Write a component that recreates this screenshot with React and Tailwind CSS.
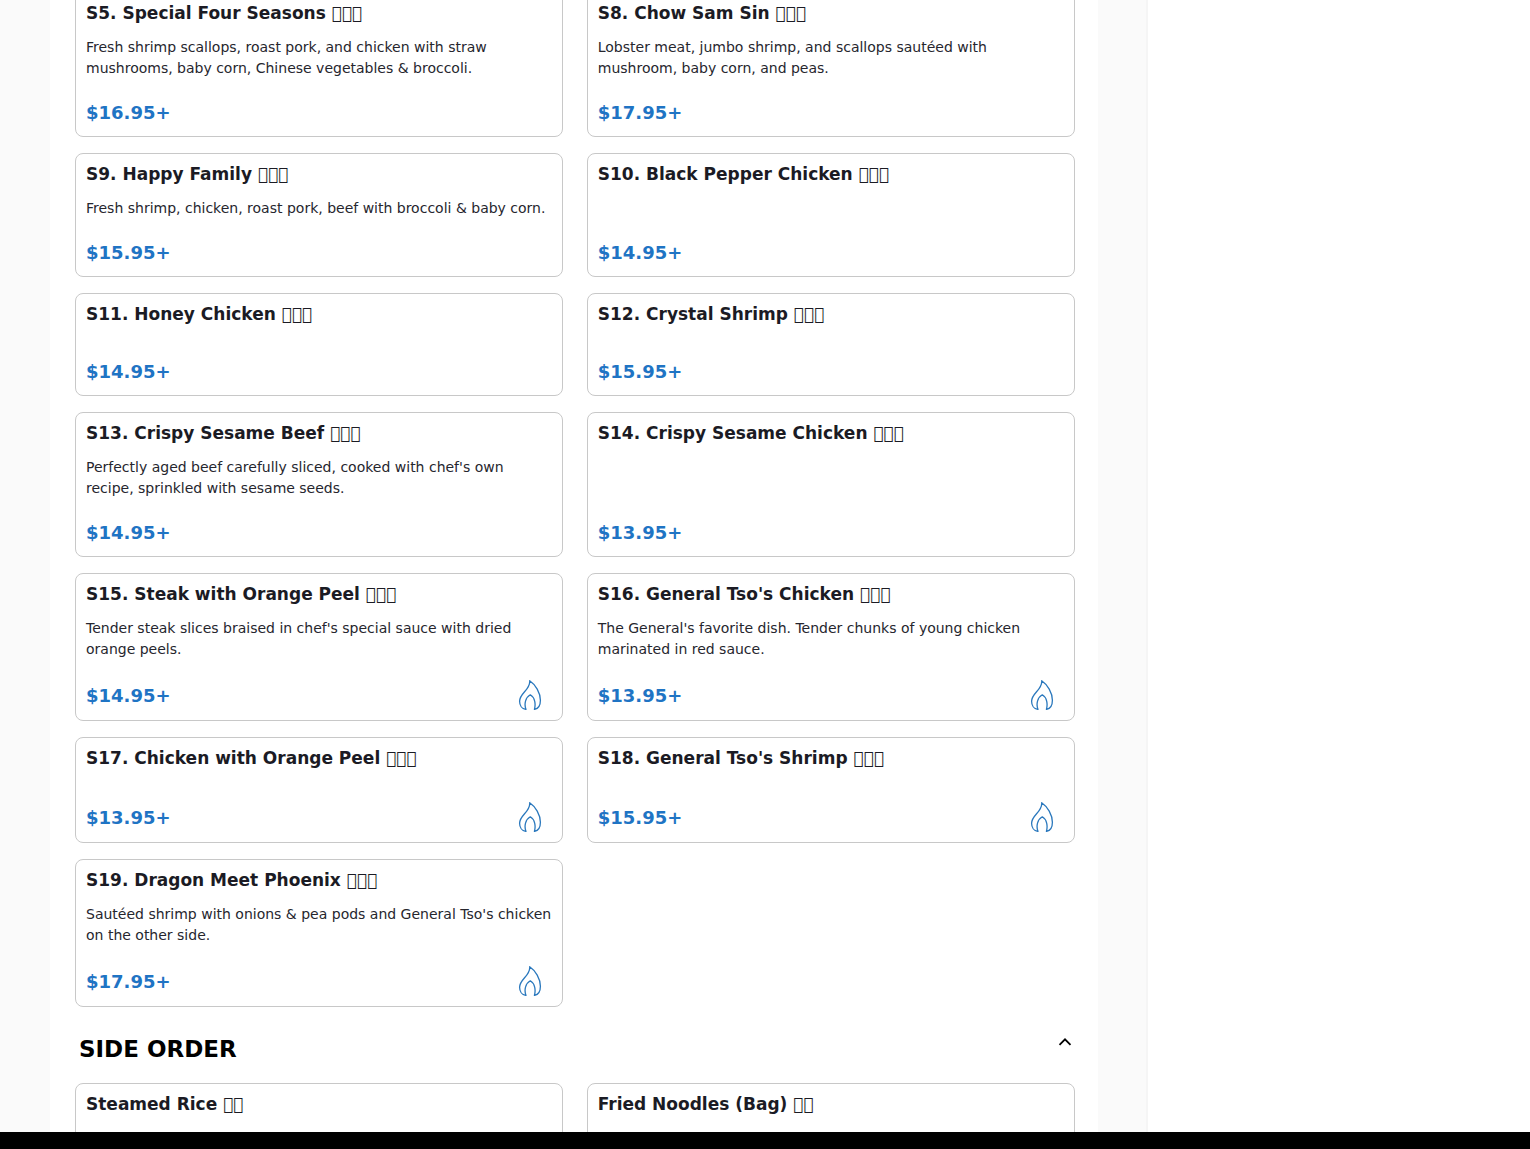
const tofu3 = '\u{F0000}\u{F0000}\u{F0000}';
const tofu2 = '\u{F0000}\u{F0000}';

const specials = [
  { name: 'S5. Special Four Seasons', text: 'Fresh shrimp scallops, roast pork, and chicken with straw mushrooms, baby corn, Chinese vegetables & broccoli.', price: '$16.95+' },
  { name: 'S8. Chow Sam Sin', text: 'Lobster meat, jumbo shrimp, and scallops sautéed with mushroom, baby corn, and peas.', price: '$17.95+' },
  { name: 'S9. Happy Family', text: 'Fresh shrimp, chicken, roast pork, beef with broccoli & baby corn.', price: '$15.95+' },
  { name: 'S10. Black Pepper Chicken', price: '$14.95+' },
  { name: 'S11. Honey Chicken', price: '$14.95+' },
  { name: 'S12. Crystal Shrimp', price: '$15.95+' },
  { name: 'S13. Crispy Sesame Beef', text: "Perfectly aged beef carefully sliced, cooked with chef's own recipe, sprinkled with sesame seeds.", price: '$14.95+' },
  { name: 'S14. Crispy Sesame Chicken', price: '$13.95+' },
  { name: 'S15. Steak with Orange Peel', text: "Tender steak slices braised in chef's special sauce with dried orange peels.", price: '$14.95+', spicy: true },
  { name: "S16. General Tso's Chicken", text: "The General's favorite dish. Tender chunks of young chicken marinated in red sauce.", price: '$13.95+', spicy: true },
  { name: 'S17. Chicken with Orange Peel', price: '$13.95+', spicy: true },
  { name: "S18. General Tso's Shrimp", price: '$15.95+', spicy: true },
  { name: 'S19. Dragon Meet Phoenix', text: "Sautéed shrimp with onions & pea pods and General Tso's chicken on the other side.", price: '$17.95+', spicy: true },
];

const sides = [{ name: 'Steamed Rice' }, { name: 'Fried Noodles (Bag)' }];

function Flame() {
  return (
    <svg viewBox="0 0 30 30" className="mr-[7px] h-[30px] w-[30px]" fill="none" stroke="#2a78bd" strokeWidth="1.3" strokeLinejoin="round" strokeLinecap="round" role="img" aria-label="Spicy">
      <path d="M11 29.400C6.800 29 4.600 25.400 4.600 21.200C4.600 13 15.600 9.800 14.700 0.700C20.500 4.600 25.400 12.600 25.400 20.300C25.400 25.200 23.400 28.800 19.400 29.400C20.900 24.200 20 17.500 15.300 14.800C10.400 17.500 8.900 24.200 11 29.400Z" />
    </svg>
  );
}

function Card({ item, glyphs }) {
  return (
    <article className="flex min-h-[103px] flex-col rounded-lg border border-[#c8c8c8] bg-white p-2.5">
      <h3 className="text-[17px] leading-5 font-bold text-[#1b1b24]">
        {item.name} <span className="font-normal">{glyphs}</span>
      </h3>
      <p className="mt-3.5 mb-5 flex-1 text-sm leading-[21px] text-[#26262e]">{item.text}</p>
      <div className="flex items-center justify-between">
        <span className="text-lg leading-[27px] font-bold text-[#1f74c4]">{item.price}</span>
        {item.spicy && <Flame />}
      </div>
    </article>
  );
}

export default function App() {
  return (
    <div className="flex h-screen flex-col overflow-hidden bg-white font-['DejaVu_Sans',sans-serif]">
      <div className="flex min-h-0 flex-1 overflow-hidden">
        <main className="w-3/4 border-r-2 border-[#f5f5f5] bg-[#fafafa] pr-12 pl-[50px]">
          <div className="h-full overflow-hidden bg-white pr-[23px] pl-[25px]">
            <section className="-mt-2 grid grid-cols-2 gap-x-6 gap-y-4">
              {specials.map((item) => (
                <Card key={item.name} item={item} glyphs={tofu3} />
              ))}
            </section>
            <section>
              <h2 className="pt-[25px] pb-[17px] text-[23px] leading-[34px] font-bold text-black">
                <button type="button" className="flex w-full items-start justify-between pl-1 text-left">
                  <span>SIDE ORDER</span>
                  <svg viewBox="0 0 20 20" className="h-5 w-5" fill="none" stroke="currentColor" strokeWidth="1.800" aria-hidden="true">
                    <path d="M4.500 12.800L10 7.300L15.500 12.800" />
                  </svg>
                </button>
              </h2>
              <div className="grid grid-cols-2 gap-x-6 gap-y-4">
                {sides.map((item) => (
                  <Card key={item.name} item={item} glyphs={tofu2} />
                ))}
              </div>
            </section>
          </div>
        </main>
        <aside className="flex-1 bg-white" />
      </div>
      <footer className="h-[17px] shrink-0 bg-black" />
    </div>
  );
}
